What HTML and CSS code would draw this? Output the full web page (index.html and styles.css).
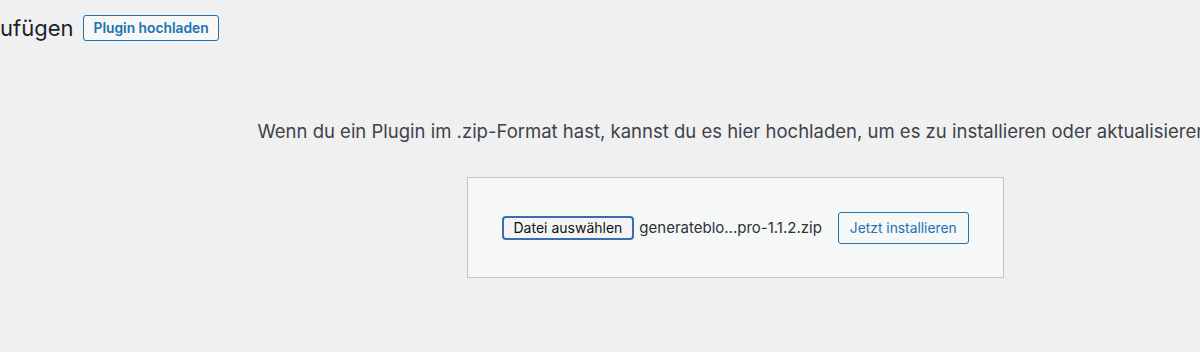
FILE: index.html
```html
<!DOCTYPE html>
<html lang="de">
<head>
<meta charset="utf-8">
<title>Plugins hinzufügen</title>
<link rel="stylesheet" href="styles.css">
</head>
<body>
<div class="wrap">
  <div class="title-row">
    <h1 class="title">ufügen</h1>
    <a class="title-action" href="#">Plugin hochladen</a>
  </div>
  <div class="upload-plugin">
    <p class="install-help">Wenn du ein Plugin im .zip-Format hast, kannst du es hier hochladen, um es zu installieren oder aktualisieren.</p>
    <form class="upload-form">
      <span class="file-input">
        <span class="file-btn">Datei auswählen</span>
        <span class="file-name">generateblo...pro-1.1.2.zip</span>
      </span>
      <button type="button" class="button">Jetzt installieren</button>
    </form>
  </div>
</div>
</body>
</html>
```
FILE: styles.css
```css
html, body {
  margin: 0;
  padding: 0;
  background: #f0f0f1;
  overflow: hidden;
}
body {
  width: 1200px;
  height: 352px;
  font-family: Inter, "Liberation Sans", sans-serif;
  color: #3c434a;
}
.wrap {
  width: 1470px;
}
.title-row {
  display: flex;
  align-items: center;
  gap: 10px;
  padding-top: 14px;
  height: 28px;
}
.title {
  margin: 0;
  font-size: 22px;
  font-weight: 400;
  color: #1d2327;
  line-height: 28px;
}
.title-action {
  display: inline-flex;
  align-items: center;
  box-sizing: border-box;
  height: 26px;
  padding: 0 9px;
  border: 1px solid #2271b1;
  border-radius: 3px;
  background: #f6f7f7;
  color: #2271b1;
  font-size: 13.8px;
  font-weight: 600;
  text-decoration: none;
}
.upload-plugin {
  display: flex;
  flex-direction: column;
  align-items: center;
  padding-top: 75px;
}
.install-help {
  margin: 0;
  font-size: 18.5px;
  line-height: 28px;
  white-space: nowrap;
}
.upload-form {
  margin-top: 32px;
  box-sizing: border-box;
  width: 537px;
  height: 101px;
  background: #f6f7f7;
  border: 1px solid #c3c4c7;
  display: flex;
  align-items: center;
  padding-left: 34px;
  gap: 16px;
}
.file-input {
  display: flex;
  align-items: center;
  gap: 5px;
}
.file-btn {
  box-sizing: border-box;
  height: 24px;
  padding: 0 10px;
  display: inline-flex;
  align-items: center;
  background: #f3f4f6;
  border: 2px solid #3b6db0;
  border-radius: 4px;
  color: #111;
  font-size: 14px;
}
.file-name {
  font-size: 15px;
  color: #2c3338;
}
.button {
  box-sizing: border-box;
  height: 32px;
  padding: 0 11px;
  background: #f6f7f7;
  border: 1px solid #2271b1;
  border-radius: 3px;
  color: #2271b1;
  font-family: inherit;
  font-size: 13.8px;
}
```
